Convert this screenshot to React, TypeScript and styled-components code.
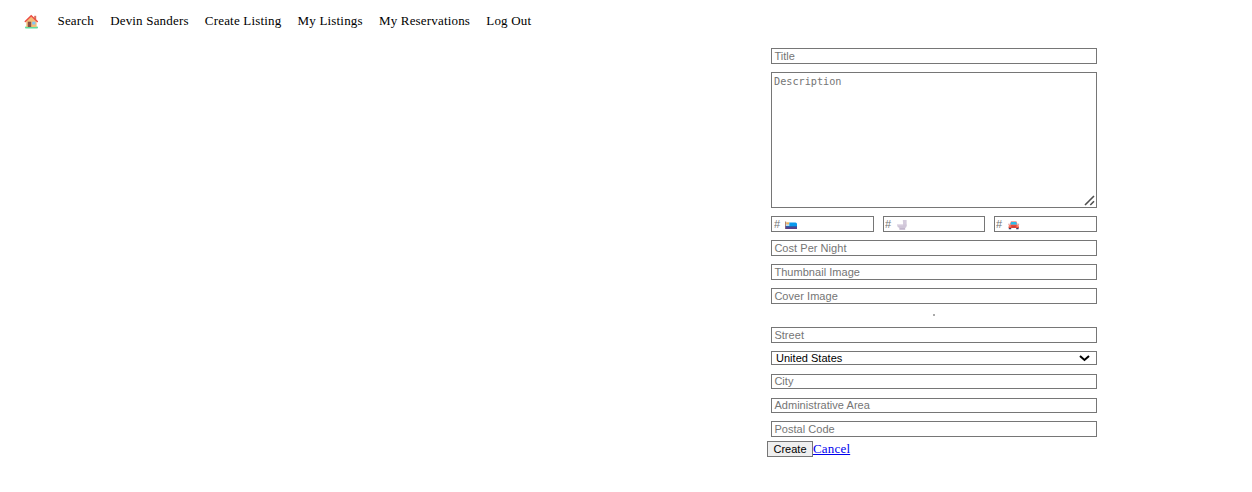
import React from 'react';
import styled, { createGlobalStyle } from 'styled-components';

const GlobalStyle = createGlobalStyle`
  * { box-sizing: border-box; }
  body {
    margin: 0;
    background: #fff;
    color: #000;
    font: 13px/15px "Liberation Serif", "Times New Roman", serif;
    letter-spacing: 0.18px;
  }
`;

const Nav = styled.nav`
  display: flex;
  align-items: center;
  gap: 16.2px;
  height: 42px;
  padding-left: 24px;
`;

const HomeLink = styled.a`
  display: flex;
  width: 17.3px;
`;

const NavLink = styled.a`
  padding-bottom: 2px;
  color: #000;
  text-decoration: none;
  white-space: nowrap;
`;

const Form = styled.form`
  width: 334px;
  margin: 6px 0 0 767px;
`;

const Fields = styled.div`
  display: flex;
  flex-direction: column;
  padding: 0 4px;
`;

const control = `
  display: block;
  width: 100%;
  margin: 0;
  border: 1px solid #767676;
  border-radius: 0;
  background: #fff;
  color: #000;
  outline: none;
`;

const Input = styled.input<{ $gap?: number; $height?: number; $inset?: number }>`
  ${control}
  height: ${(p) => p.$height ?? 16}px;
  margin-bottom: ${(p) => p.$gap ?? 8}px;
  padding: 0 2px ${(p) => (p.$height ? 1 : 0)}px ${(p) => p.$inset ?? 2.4}px;
  font: 11px "Liberation Sans", Arial, sans-serif;
  letter-spacing: 0.04px;
  &::placeholder { color: #757575; }
`;

const TextArea = styled.textarea`
  ${control}
  height: 136px;
  padding: 3px 2px 2px;
  font: 10.2px/12px "DejaVu Sans Mono", monospace;
  letter-spacing: 0;
  resize: none;
  &::placeholder { color: #757575; }
`;

const Overlay = styled.div`
  position: relative;
`;

const ResizeGrip = styled.svg`
  position: absolute;
  right: 1px;
  bottom: 1px;
  pointer-events: none;
`;

const DescriptionWrap = styled(Overlay)`
  height: 136px;
  margin-bottom: 8px;
`;

const Counts = styled.div`
  display: grid;
  grid-template-columns: 103px 102px 103px;
  column-gap: 9px;
`;

const CountIcon = styled.span<{ $left: number }>`
  position: absolute;
  left: ${(p) => p.$left}px;
  top: 4px;
  display: flex;
  pointer-events: none;
`;

const Divider = styled.hr`
  width: 2px;
  height: 2px;
  margin: 2px auto 11px;
  border: 0;
  background: #aaa;
`;

const Select = styled.select`
  ${control}
  height: 14px;
  padding: 0 4px;
  appearance: none;
  font: 11px/12px "Liberation Sans", Arial, sans-serif;
  letter-spacing: 0.02px;
`;

const SelectWrap = styled(Overlay)`
  margin-bottom: 9px;
`;

const Chevron = styled.svg`
  position: absolute;
  right: 7px;
  top: 3px;
  pointer-events: none;
`;

const Actions = styled.div`
  display: flex;
  align-items: center;
  height: 16px;
`;

const CreateButton = styled.button`
  width: 46px;
  height: 16px;
  padding: 0;
  border: 1px solid #767676;
  border-radius: 0;
  background: #efefef;
  color: #000;
  font: 11px "Liberation Sans", Arial, sans-serif;
  letter-spacing: 0;
`;

const CancelLink = styled.a`
  padding-bottom: 2px;
  color: #0000ee;
  text-decoration: underline;
`;

const House = () => (
  <svg width="15" height="15" viewBox="0 0 15 15">
    <rect x="1" y="12.6" width="13" height="1.9" rx=".9" fill="#5fdc9b" />
    <path d="M10.2 1.8h2v4h-2z" fill="#d8705a" />
    <path d="M2.3 7 7.2 2.2 12.6 7v6H2.3z" fill="#f3bd78" />
    <path d="M3.8 7.7h3.4V13H3.8z" fill="#8a5145" />
    <path d="M8.2 7.7h3.2v2.8H8.2z" fill="#83c5f5" />
    <path d="M1.3 7.5 7.2 1.8l6.1 5.7" fill="none" stroke="#ed4c43" strokeWidth="1.5" strokeLinecap="round" />
  </svg>
);

const Bed = () => (
  <svg width="12" height="10" viewBox="0 0 12 10">
    <path d="M0 1.5h1.2V9H0z" fill="#a98578" />
    <path d="M.5 6h11.5v3H.5z" fill="#59408a" />
    <path d="M1.2 4h3.3v2H1.2z" fill="#b8d8ef" />
    <path d="M1.2 2.3h3.2v2H1.2z" fill="#f0b45c" />
    <path d="M4.3 2.4h6.2q1.5 0 1.5 1.5V7H4.3z" fill="#0899ee" />
    <path d="M1 6h11v1.2H1z" fill="#2862ae" />
  </svg>
);

const Toilet = () => (
  <svg width="12" height="11" viewBox="0 0 12 11">
    <path d="M6.8 0h3.8v5.7H7.2z" fill="#d4cbdc" />
    <path d="M1 4.4h9.6v1.7q0 1.5-1.4 2V10H3.4V8Q1 7 1 4.4z" fill="#d0c6d8" />
    <path d="M1 4.3h6v1H1z" fill="#e5ddea" />
    <path d="M3.6 8h5.4v.8H3.6z" fill="#bfb3ca" />
  </svg>
);

const Car = () => (
  <svg width="12" height="10" viewBox="0 0 12 10">
    <path d="M.8 7h2.4v2.3H.8zM8.2 7h2.4v2.3H8.2z" fill="#433b5b" />
    <path d="m3 1.2h5.4L9.8 4.5H1.6z" fill="#ed8a85" />
    <path d="M3.2 2h5L9 4.8H2.4z" fill="#29bce9" />
    <path d="M1.6 4.7h8.2l.9 1V8h-10V5.7z" fill="#f04a38" />
    <path d="M3.7 6.4h4v1h-4z" fill="#a83e42" />
    <path d="M1.2 5.6h1.5v1H1.2zM8.7 5.6h1.5v1H8.7z" fill="#ffc0a0" />
    <path d="M.3 3.8h1.2v.9H.3zM9.9 3.8h1.2v.9H9.9z" fill="#dd8585" />
  </svg>
);

const links = ['Search', 'Devin Sanders', 'Create Listing', 'My Listings', 'My Reservations', 'Log Out'];
const counts = [
  { name: 'beds', Icon: Bed, inset: 2, left: 14 },
  { name: 'baths', Icon: Toilet, inset: 1, left: 13 },
  { name: 'parking', Icon: Car, inset: 1, left: 13.5 },
];

export default function App() {
  return (
    <>
      <GlobalStyle />
      <Nav>
        <HomeLink aria-label="Home"><House /></HomeLink>
        {links.map((label) => <NavLink key={label}>{label}</NavLink>)}
      </Nav>
      <Form>
        <Fields>
          <Input placeholder="Title" />
          <DescriptionWrap>
            <TextArea placeholder="Description" />
            <ResizeGrip width="12" height="12" viewBox="0 0 12 12" fill="none" stroke="#505050" strokeWidth="1.6">
              <path d="M1 10 10 1M6.3 10l3.7-3.7" />
            </ResizeGrip>
          </DescriptionWrap>
          <Counts>
            {counts.map(({ name, Icon, inset, left }) => (
              <Overlay key={name}>
                <Input placeholder="#" aria-label={name} $inset={inset} />
                <CountIcon $left={left}><Icon /></CountIcon>
              </Overlay>
            ))}
          </Counts>
          <Input placeholder="Cost Per Night" />
          <Input placeholder="Thumbnail Image" />
          <Input placeholder="Cover Image" />
          <Divider />
          <Input placeholder="Street" />
          <SelectWrap>
            <Select aria-label="Country"><option>United States</option></Select>
            <Chevron width="11" height="8" viewBox="0 0 11 8" fill="none" stroke="#000" strokeWidth="2">
              <path d="m1 2 4.5 4L10 2" />
            </Chevron>
          </SelectWrap>
          <Input placeholder="City" $height={15} $gap={9} />
          <Input placeholder="Administrative Area" $height={15} />
          <Input placeholder="Postal Code" $gap={4} />
        </Fields>
        <Actions>
          <CreateButton type="button">Create</CreateButton>
          <CancelLink href="#">Cancel</CancelLink>
        </Actions>
      </Form>
    </>
  );
}
